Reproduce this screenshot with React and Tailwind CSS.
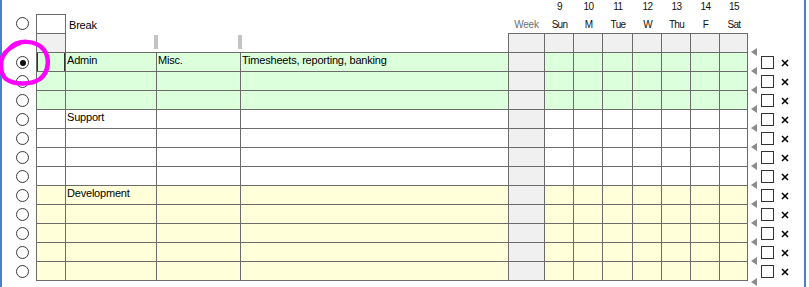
import React from 'react';

const days = [
  { n: '9', d: 'Sun', w: 'w-[29px]' },
  { n: '10', d: 'M', w: 'w-[29px]' },
  { n: '11', d: 'Tue', w: 'w-[30px]' },
  { n: '12', d: 'W', w: 'w-[29px]' },
  { n: '13', d: 'Thu', w: 'w-[29px]' },
  { n: '14', d: 'F', w: 'w-[29px]' },
  { n: '15', d: 'Sat', w: 'w-[28px]' },
];

const G = 'bg-[#dcffdc]';
const Y = 'bg-[#ffffda]';
const W = 'bg-white';

const rows = [
  { bg: G, name: 'Admin', cat: 'Misc.', desc: 'Timesheets, reporting, banking', selected: true },
  { bg: G },
  { bg: G },
  { bg: W, name: 'Support' },
  { bg: W },
  { bg: W },
  { bg: W },
  { bg: Y, name: 'Development' },
  { bg: Y },
  { bg: Y },
  { bg: Y },
  { bg: Y },
];

function Radio({ checked }) {
  return (
    <div className="ml-[14px] w-[13px] h-[13px] rounded-full border border-[#3a3a3a] bg-white flex items-center justify-center">
      {checked && <div className="w-[6px] h-[6px] rounded-full bg-[#111]" />}
    </div>
  );
}

function Triangle({ className }) {
  return (
    <svg className={className} width="6" height="8" viewBox="0 0 6 8">
      <polygon points="6,0 6,8 0,4" fill="#8c8c8c" />
    </svg>
  );
}

function Cross() {
  return (
    <svg width="8" height="8" viewBox="0 0 8 8">
      <path d="M1 1 L7 7 M7 1 L1 7" stroke="#000" strokeWidth="1.5" />
    </svg>
  );
}

function Cell({ w, bg, children }) {
  return (
    <div className={`${w} ${bg} h-[19px] border-r border-b border-[#6b6b6b] pl-px leading-[14px] whitespace-nowrap overflow-hidden`}>
      {children}
    </div>
  );
}

function DataRow({ row, last }) {
  return (
    <div className="flex h-[19px]">
      <div className="w-[34px] flex items-center">
        <Radio checked={row.selected} />
      </div>
      <div
        className={`w-[30px] h-[19px] border-l border-r border-b border-[#6b6b6b] ${row.bg} ${
          row.selected ? 'shadow-[inset_1px_0_0_#333,inset_-1px_0_0_#333]' : ''
        }`}
      />
      <Cell w="w-[91px]" bg={row.bg}>{row.name}</Cell>
      <Cell w="w-[84px]" bg={row.bg}>{row.cat}</Cell>
      <Cell w="w-[268px]" bg={row.bg}>{row.desc}</Cell>
      <Cell w="w-[36px]" bg="bg-[#f0f0f0]" />
      {days.map((d) => (
        <Cell key={d.d} w={d.w} bg={row.bg} />
      ))}
      <div className="relative w-[56px] flex items-start">
        <Triangle className="absolute left-[3px] top-[-5px]" />
        <div className="ml-[13px] mt-[3px] w-[13px] h-[13px] border border-[#333] bg-white" />
        <div className="ml-[7px] mt-[6px]">
          <Cross />
        </div>
        {last && <Triangle className="absolute left-[3px] bottom-[-5px]" />}
      </div>
    </div>
  );
}

export default function App() {
  return (
    <div className="relative w-[809px] h-[287px] bg-white text-black text-[11px] tracking-[-0.2px] font-['Liberation_Sans',Arial,sans-serif]">
      <div className="w-[806px] h-full border-l-2 border-r-2 border-[#4b7fd2]">
        {/* day numbers */}
        <div className="flex h-[14px]">
          <div className="w-[543px]" />
          {days.map((d) => (
            <div key={d.n} className={`${d.w} text-center text-[10px] leading-[11px] pt-[1px] tracking-[-0.5px] text-[#111]`}>
              {d.n}
            </div>
          ))}
        </div>

        {/* break row + day names */}
        <div className="flex h-[19px]">
          <div className="w-[34px] flex items-center">
            <Radio />
          </div>
          <div className="w-[30px] h-[19px] border-l border-t border-r border-[#6b6b6b] bg-white" />
          <div className="w-[442px] pl-[3px] pt-[4px] leading-[14px]">Break</div>
          <div className="w-[37px] text-center text-[10px] leading-[12px] pt-[5px] text-[#6e6e6e] tracking-[-0.2px]">Week</div>
          {days.map((d) => (
            <div key={d.d} className={`${d.w} text-center text-[10px] leading-[12px] pt-[5px] tracking-[-0.7px] text-[#111]`}>
              {d.d}
            </div>
          ))}
        </div>

        {/* gray header row */}
        <div className="flex h-[19px]">
          <div className="w-[34px]" />
          <div className="w-[30px] h-[19px] border-l border-t border-r border-[#6b6b6b] bg-[#f0f0f0]" />
          <div className="w-[88px]" />
          <div className="w-[4px] h-[14px] mt-[2px] bg-[#c4c4c4]" />
          <div className="w-[80px]" />
          <div className="w-[4px] h-[14px] mt-[2px] bg-[#c4c4c4]" />
          <div className="w-[266px]" />
          <div className="w-[37px] h-[19px] border-l border-t border-r border-[#6b6b6b] bg-[#f0f0f0]" />
          {days.map((d) => (
            <div key={d.d} className={`${d.w} h-[19px] border-t border-r border-[#6b6b6b] bg-[#f0f0f0]`} />
          ))}
        </div>

        {/* table top line */}
        <div className="flex h-[1px]">
          <div className="w-[34px]" />
          <div className="w-[712px] bg-[#6b6b6b]" />
        </div>

        {rows.map((r, i) => (
          <DataRow key={i} row={r} last={i === rows.length - 1} />
        ))}
      </div>

      {/* hand-drawn highlight */}
      <svg className="absolute left-0 top-0 pointer-events-none" width="60" height="90" viewBox="0 0 60 90">
        <path
          d="M10 48 C17 40, 36 39, 44 50 C50 58, 49 72, 40 79 C31 85, 14 85, 6 79 C0 74, 0 62, 3 56 C6 50, 12 46, 20 43"
          fill="none"
          stroke="#ff00ff"
          strokeWidth="4.5"
          strokeLinecap="round"
        />
      </svg>
    </div>
  );
}
